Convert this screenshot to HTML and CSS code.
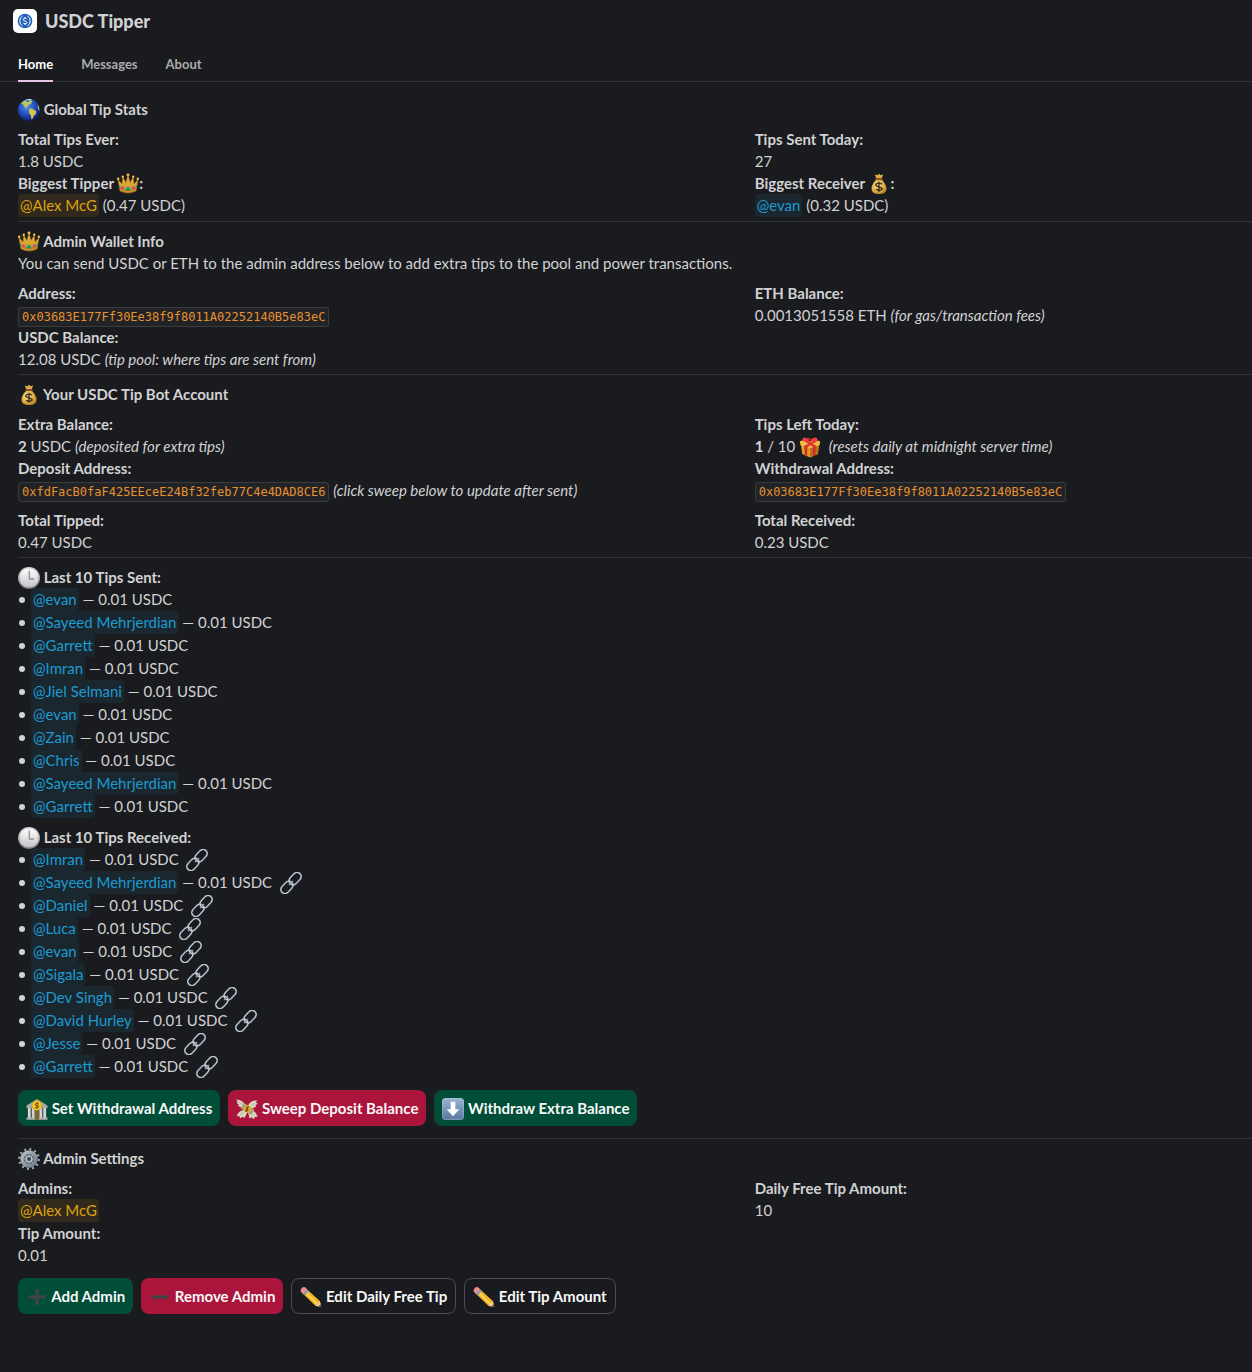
FILE: index.html
```html
<!DOCTYPE html>
<html lang="en">
<head>
<meta charset="utf-8">
<meta name="viewport" content="width=device-width, initial-scale=1">
<title>USDC Tipper</title>
<link rel="stylesheet" href="styles.css">
</head>
<body>
<svg class="sprite" aria-hidden="true">
  <defs>
    <radialGradient id="sea" cx=".4" cy=".35" r=".65"><stop offset="0" stop-color="#4d8df0"/><stop offset=".55" stop-color="#2350c4"/><stop offset="1" stop-color="#0d1d66"/></radialGradient>
    <linearGradient id="gold" x1="0" y1="0" x2="0" y2="1"><stop offset="0" stop-color="#eec64c"/><stop offset="1" stop-color="#c98a1b"/></linearGradient>
    <radialGradient id="bag" cx=".4" cy=".4" r=".65"><stop offset="0" stop-color="#fbe08a"/><stop offset=".6" stop-color="#e0b04a"/><stop offset="1" stop-color="#b5832a"/></radialGradient>
    <linearGradient id="face" x1="0" y1="0" x2="0" y2="1"><stop offset="0" stop-color="#ffffff"/><stop offset="1" stop-color="#c4c4c8"/></linearGradient>
    <linearGradient id="rim" x1="0" y1="0" x2="0" y2="1"><stop offset="0" stop-color="#d8d8da"/><stop offset="1" stop-color="#77777b"/></linearGradient>
    <linearGradient id="blue" x1="0" y1="0" x2="0" y2="1"><stop offset="0" stop-color="#9bb4d2"/><stop offset="1" stop-color="#56789f"/></linearGradient>
    <linearGradient id="steel" x1="0" y1="0" x2="1" y2="1"><stop offset="0" stop-color="#b4bec8"/><stop offset="1" stop-color="#737e89"/></linearGradient>
  </defs>
  <symbol id="globe" viewBox="0 0 22 22">
    <circle cx="11" cy="11" r="11" fill="url(#sea)"/>
    <path d="M3 4.500 6.500 1.500 9 1.200 8.200 2.800 10.800 3.100 12.200 1.200 14.500 1.800 13.500 4.200 11.400 5.600 10 7.200 8.300 7.500 9.500 9 8.400 9.400 6.300 7.800 5.100 5.600Z" fill="#b9c75b"/>
    <path d="M10.800 10.200 13.200 9.300 15.500 10.500 18.300 12.300 17.700 15.200 15.700 16.800 14.800 19.600 13.300 20.600 13 16.800 11.200 14.200Z" fill="#d0c64e"/>
    <path d="M19.700 5.200 21 8 21.500 11 20.600 11.800 19.700 8.500Z" fill="#9aab4a"/>
    <path d="M7.500.8 11 .1 14 .6 12 1.500Z" fill="#e8f0e0"/>
  </symbol>
  <symbol id="crown" viewBox="0 0 22 22">
    <path d="M3 18 .8 6.200 5 11 5.700 4.200 9 9.600 11 2 13 9.600 16.300 4.200 17 11 21.200 6.200 19 18Q11 22 3 18Z" fill="url(#gold)" stroke="#a8741a" stroke-width=".6"/>
    <path d="M3 15Q11 19.500 19 15" fill="none" stroke="#a06d16" stroke-width=".8"/>
    <circle cx="1.200" cy="5.800" r="1.200" fill="#f3c548"/><circle cx="5.800" cy="3.700" r="1.200" fill="#f3c548"/><circle cx="11" cy="2" r="1.400" fill="#f3c548"/><circle cx="16.200" cy="3.700" r="1.200" fill="#f3c548"/><circle cx="20.800" cy="5.800" r="1.200" fill="#f3c548"/>
    <ellipse cx="11" cy="16" rx="2.100" ry="1.900" fill="#0c9c83"/><circle cx="5.500" cy="14.800" r="1.300" fill="#d32fa0"/><circle cx="16.500" cy="14.800" r="1.300" fill="#d32fa0"/><circle cx="2.700" cy="13.300" r=".9" fill="#15a08a"/><circle cx="19.300" cy="13.300" r=".9" fill="#15a08a"/>
  </symbol>
  <symbol id="moneybag" viewBox="0 0 22 22">
    <path d="M8.400 5.500 6.800 1.600 9.300 2.300 11 .8 12.800 2.300 15.200 1.400 13.600 5.500Z" fill="#dcae4b"/>
    <path d="M8.500 6.500Q3.500 11 3.500 16 3.500 21 11 21T18.500 16Q18.500 11 13.500 6.500Z" fill="url(#bag)"/>
    <path d="M7.800 6H14.200" stroke="#8d4a22" stroke-width="1.700" stroke-linecap="round"/>
    <path d="M14 11.200Q11 9.200 8.600 10.800T10.900 13.800 13.600 16.600 8.100 16.400M11 8.700V18.800" fill="none" stroke="#38291b" stroke-width="1.300"/>
  </symbol>
  <symbol id="gift" viewBox="0 0 22 22">
    <path d="M1.800 8 11 11 20.200 8 18.800 18 11 21.500 3.200 18Z" fill="#d99b24"/>
    <path d="M11 10.500 20.200 8 18.800 18 11 21.500Z" fill="#b97415"/>
    <path d="M.8 5.200 10 2.500 21.200 5.200 20.500 9.200 11 12.200 1.500 9.200Z" fill="#f1bd3e"/>
    <path d="M5.400 10 8.200 11V20L5.800 19ZM13.800 11 16.800 10 16.200 19.200 13.800 20.200Z" fill="#d7262d"/>
    <path d="M4.500 10.300 16.500 4 18.800 4.700 8 11.500ZM3.600 4.300 6 3.600 17.600 10 14.500 11Z" fill="#e23038"/>
    <path d="M11 4.800Q4 7 3.400 3.200 4-.5 11 3.800 18-.5 18.600 3.200 18 7 11 4.800Z" fill="#ef3b43"/><circle cx="11" cy="4.200" r="1.600" fill="#ad1822"/>
  </symbol>
  <symbol id="clock" viewBox="0 0 22 22">
    <circle cx="11" cy="11" r="11" fill="url(#rim)"/><circle cx="11" cy="11" r="9.600" fill="url(#face)"/>
    <path d="M11.300 3.800V12H16" fill="none" stroke="#919195" stroke-width="1.300"/>
    <path d="M11 2V3M11 19V20M2 11H3M19 11H20" stroke="#aaa" stroke-width=".7"/>
  </symbol>
  <symbol id="link" viewBox="0 0 22 22">
    <g fill="none" transform="rotate(-47 11 11)">
      <g stroke="#71808e" stroke-width="1.900"><rect x="-2" y="6.900" width="14" height="8.200" rx="4.100"/><rect x="10" y="6.900" width="14" height="8.200" rx="4.100"/></g>
      <g stroke="#dfe5ea" stroke-width=".8"><rect x="-2" y="6.900" width="14" height="8.200" rx="4.100"/><rect x="10" y="6.900" width="14" height="8.200" rx="4.100"/></g>
      <path d="M8 11H14" stroke="#9ba9b5" stroke-width="1.200"/>
    </g>
  </symbol>
  <symbol id="bank" viewBox="0 0 22 22">
    <path d="M.5 7.500 11 1 21.500 7.500V10H.5Z" fill="#a9aaa3"/><path d="M1.500 10H20.500V20H1.500Z" fill="#4c5d6b"/>
    <path d="M2 10H4.600V20H2ZM6 10H8.500V20H6ZM13.500 10H16V20H13.500ZM17.400 10H20V20H17.400Z" fill="#d6d6cd"/>
    <path d="M.5 19.500H21.500V21.800H.5Z" fill="#aeb0ab"/><path d="M9 13H13V21.800H9Z" fill="#7c682d"/>
    <circle cx="11" cy="7.500" r="4.900" fill="#f5c726" stroke="#c39016" stroke-width=".6"/>
    <path d="M13 6Q11 4.500 9.500 5.800T11 7.600 12.500 9.400 9 9.200M11 4.200V10.800" fill="none" stroke="#67480b" stroke-width=".9"/>
  </symbol>
  <symbol id="wings" viewBox="0 0 22 22">
    <path d="M10 9Q7 1.500.3 1.600L1.500 4 .6 4.900 2.800 6.600 2 7.800 6 10ZM12 8Q14 2 21 2.500L20 4.500 21.700 5.700 19.500 7.200 20 8.700 15 11ZM8.500 12Q2 12.500.8 18.500L3.200 18 4.200 20.200 6.600 18.700 8.500 20 11.500 14ZM12 14 13.500 20.500 15.800 19.200 18 21.500 18.700 19 21.700 18.700Q20.500 13 14.500 12Z" fill="#d9d5be"/>
    <path d="M8 7.500 3 4M14.500 8 18.500 5M8 14 4 17M15 14 18 18" stroke="#b0ab94" stroke-width=".7"/>
    <path d="M8 5 18.500 12 15 17 4.500 10Z" fill="#a8a387"/>
    <path d="M10 6.300 16.300 10.500 12.800 15.600 6.500 11.400Z" fill="#e0a72b"/>
    <path d="M12.900 9.600Q11.200 8.500 10.500 9.700T11.500 11.400 11 13 9.500 12.300M12.300 8.200 10.300 13.800" fill="none" stroke="#4c4325" stroke-width=".8"/>
  </symbol>
  <symbol id="down" viewBox="0 0 22 22">
    <rect width="22" height="22" rx="3.500" fill="url(#blue)"/><rect x=".6" y=".6" width="20.800" height="20.800" rx="3" fill="none" stroke="#ccd9e8" stroke-opacity=".3"/>
    <path d="M8.700 3.800H13.300V11.300H17.300L11 18.300 4.700 11.300H8.700Z" fill="#fff"/>
  </symbol>
  <symbol id="gear" viewBox="0 0 22 22">
    <circle cx="11" cy="11" r="9.800" fill="none" stroke="#9aa6b0" stroke-width="2.400" stroke-dasharray="2 3.131"/>
    <circle cx="11" cy="11" r="6.800" fill="none" stroke="url(#steel)" stroke-width="3.900"/>
    <circle cx="11" cy="11" r="5.200" fill="#66717c"/><path d="M11 5.500V16.500M5.500 11H16.500M7 7 15 15M15 7 7 15" stroke="#97a2ac" stroke-width=".9"/>
    <circle cx="11" cy="11" r="2.800" fill="#3a424b" stroke="#b3bdc6" stroke-width="1.500"/>
  </symbol>
  <symbol id="plus" viewBox="0 0 22 22"><path d="M9.300 3H12.700V9.300H19.300V12.700H12.700V19.300H9.300V12.700H2.700V9.300H9.300Z" fill="#414345"/></symbol>
  <symbol id="minus" viewBox="0 0 22 22"><path d="M2.700 9.300H19.300V12.700H2.700Z" fill="#414345"/></symbol>
  <symbol id="pencil" viewBox="0 0 22 22">
    <path d="M5.800 2.200 19.800 15 21.300 20.900 15.400 19.700 1.700 6.600Z" fill="#f4b527"/><path d="M4.200 5 17 17.800" stroke="#ffd765" stroke-width="1.600"/><path d="M2.900 7.700 6.900 3.200 8.800 4.900 4.700 9.400Z" fill="#8698b0"/>
    <path d="M.7 5.300Q.2 3.200 2 1.700T5.500 1.600L6.900 3.200 2.900 7.700Z" fill="#ef8c90"/><path d="M19.800 15 21.300 20.900 15.400 19.700Z" fill="#ecca96"/><path d="M20.500 18.300 21.300 20.900 18.700 20.300Z" fill="#3b3531"/>
  </symbol>
</svg>

<header class="app-header">
  <svg class="app-logo" viewBox="0 0 24 24" aria-hidden="true">
    <rect width="24" height="24" rx="5" fill="#fff"/><circle cx="12" cy="12" r="7.300" fill="#2261ba"/>
    <path d="M9.600 7Q6.800 8.300 6.800 12T9.600 17M14.400 7Q17.200 8.300 17.200 12T14.400 17M13.900 10.200Q13.500 9.200 12 9.200 10.100 9.200 10.100 10.500T12 12 13.900 13.500 12 14.800Q10.400 14.800 10.100 13.700M12 8V9.200M12 14.800V16" fill="none" stroke="#fff" stroke-width="1"/>
  </svg>
  <h1 class="app-title">USDC Tipper</h1>
</header>
<nav class="tabs" aria-label="App">
  <a class="tab tab-active" href="#home" aria-current="page">Home</a>
  <a class="tab" href="#messages">Messages</a>
  <a class="tab" href="#about">About</a>
</nav>

<main class="content" id="home">
  <section class="block">
    <h2 class="heading"><svg class="emoji"><use href="#globe"/></svg> Global Tip Stats</h2>
    <dl class="fields">
      <div><dt>Total Tips Ever:</dt><dd>1.8 USDC</dd></div>
      <div><dt>Tips Sent Today:</dt><dd>27</dd></div>
      <div><dt>Biggest Tipper <svg class="emoji"><use href="#crown"/></svg>:</dt><dd><a class="mention mention-self" href="#alex">@Alex McG</a> (0.47 USDC)</dd></div>
      <div><dt>Biggest Receiver <svg class="emoji"><use href="#moneybag"/></svg>:</dt><dd><a class="mention" href="#evan">@evan</a> (0.32 USDC)</dd></div>
    </dl>
  </section>

  <section class="block">
    <h2 class="heading"><svg class="emoji"><use href="#crown"/></svg> Admin Wallet Info</h2>
    <p class="text">You can send USDC or ETH to the admin address below to add extra tips to the pool and power transactions.</p>
    <dl class="fields">
      <div><dt>Address:</dt><dd><code class="code">0x03683E177Ff30Ee38f9f8011A02252140B5e83eC</code></dd></div>
      <div><dt>ETH Balance:</dt><dd>0.0013051558 ETH <em>(for gas/transaction fees)</em></dd></div>
      <div><dt>USDC Balance:</dt><dd>12.08 USDC <em>(tip pool: where tips are sent from)</em></dd></div>
    </dl>
  </section>

  <section class="block">
    <h2 class="heading"><svg class="emoji"><use href="#moneybag"/></svg> Your USDC Tip Bot Account</h2>
    <dl class="fields">
      <div><dt>Extra Balance:</dt><dd><b>2</b> USDC <em>(deposited for extra tips)</em></dd></div>
      <div><dt>Tips Left Today:</dt><dd><b>1</b> / 10 <svg class="emoji"><use href="#gift"/></svg>&nbsp; <em>(resets daily at midnight server time)</em></dd></div>
      <div><dt>Deposit Address:</dt><dd><code class="code">0xfdFacB0faF425EEceE24Bf32feb77C4e4DAD8CE6</code> <em>(click sweep below to update after sent)</em></dd></div>
      <div><dt>Withdrawal Address:</dt><dd><code class="code">0x03683E177Ff30Ee38f9f8011A02252140B5e83eC</code></dd></div>
    </dl>
    <dl class="fields">
      <div><dt>Total Tipped:</dt><dd>0.47 USDC</dd></div>
      <div><dt>Total Received:</dt><dd>0.23 USDC</dd></div>
    </dl>
  </section>

  <section class="block block-actions">
    <h2 class="heading"><svg class="emoji"><use href="#clock"/></svg> Last 10 Tips Sent:</h2>
    <ul class="tips">
      <li><a class="mention" href="#evan">@evan</a> — 0.01 USDC</li>
      <li><a class="mention" href="#sayeed">@Sayeed Mehrjerdian</a> — 0.01 USDC</li>
      <li><a class="mention" href="#garrett">@Garrett</a> — 0.01 USDC</li>
      <li><a class="mention" href="#imran">@Imran</a> — 0.01 USDC</li>
      <li><a class="mention" href="#jiel">@Jiel Selmani</a> — 0.01 USDC</li>
      <li><a class="mention" href="#evan">@evan</a> — 0.01 USDC</li>
      <li><a class="mention" href="#zain">@Zain</a> — 0.01 USDC</li>
      <li><a class="mention" href="#chris">@Chris</a> — 0.01 USDC</li>
      <li><a class="mention" href="#sayeed">@Sayeed Mehrjerdian</a> — 0.01 USDC</li>
      <li><a class="mention" href="#garrett">@Garrett</a> — 0.01 USDC</li>
    </ul>
    <h2 class="heading heading-next"><svg class="emoji"><use href="#clock"/></svg> Last 10 Tips Received:</h2>
    <ul class="tips">
      <li><a class="mention" href="#imran">@Imran</a> — 0.01 USDC&nbsp; <a href="#tx1" aria-label="Transaction"><svg class="emoji"><use href="#link"/></svg></a></li>
      <li><a class="mention" href="#sayeed">@Sayeed Mehrjerdian</a> — 0.01 USDC&nbsp; <a href="#tx2" aria-label="Transaction"><svg class="emoji"><use href="#link"/></svg></a></li>
      <li><a class="mention" href="#daniel">@Daniel</a> — 0.01 USDC&nbsp; <a href="#tx3" aria-label="Transaction"><svg class="emoji"><use href="#link"/></svg></a></li>
      <li><a class="mention" href="#luca">@Luca</a> — 0.01 USDC&nbsp; <a href="#tx4" aria-label="Transaction"><svg class="emoji"><use href="#link"/></svg></a></li>
      <li><a class="mention" href="#evan">@evan</a> — 0.01 USDC&nbsp; <a href="#tx5" aria-label="Transaction"><svg class="emoji"><use href="#link"/></svg></a></li>
      <li><a class="mention" href="#sigala">@Sigala</a> — 0.01 USDC&nbsp; <a href="#tx6" aria-label="Transaction"><svg class="emoji"><use href="#link"/></svg></a></li>
      <li><a class="mention" href="#dev">@Dev Singh</a> — 0.01 USDC&nbsp; <a href="#tx7" aria-label="Transaction"><svg class="emoji"><use href="#link"/></svg></a></li>
      <li><a class="mention" href="#david">@David Hurley</a> — 0.01 USDC&nbsp; <a href="#tx8" aria-label="Transaction"><svg class="emoji"><use href="#link"/></svg></a></li>
      <li><a class="mention" href="#jesse">@Jesse</a> — 0.01 USDC&nbsp; <a href="#tx9" aria-label="Transaction"><svg class="emoji"><use href="#link"/></svg></a></li>
      <li><a class="mention" href="#garrett">@Garrett</a> — 0.01 USDC&nbsp; <a href="#tx10" aria-label="Transaction"><svg class="emoji"><use href="#link"/></svg></a></li>
    </ul>
    <div class="actions">
      <button class="button button-primary" type="button"><svg class="emoji"><use href="#bank"/></svg> Set Withdrawal Address</button>
      <button class="button button-danger" type="button"><svg class="emoji"><use href="#wings"/></svg> Sweep Deposit Balance</button>
      <button class="button button-primary" type="button"><svg class="emoji"><use href="#down"/></svg> Withdraw Extra Balance</button>
    </div>
  </section>

  <section class="block">
    <h2 class="heading"><svg class="emoji"><use href="#gear"/></svg> Admin Settings</h2>
    <dl class="fields">
      <div><dt>Admins:</dt><dd><a class="mention mention-self" href="#alex">@Alex McG</a></dd></div>
      <div><dt>Daily Free Tip Amount:</dt><dd>10</dd></div>
      <div><dt>Tip Amount:</dt><dd>0.01</dd></div>
    </dl>
    <div class="actions">
      <button class="button button-primary" type="button"><svg class="emoji"><use href="#plus"/></svg> Add Admin</button>
      <button class="button button-danger" type="button"><svg class="emoji"><use href="#minus"/></svg> Remove Admin</button>
      <button class="button" type="button"><svg class="emoji"><use href="#pencil"/></svg> Edit Daily Free Tip</button>
      <button class="button" type="button"><svg class="emoji"><use href="#pencil"/></svg> Edit Tip Amount</button>
    </div>
  </section>
</main>
</body>
</html>
```
FILE: styles.css
```css
* {
  box-sizing: border-box;
}

body {
  margin: 0;
  background: #1a1b1f;
  color: #d1d2d3;
  font: 15px/22px Lato, sans-serif;
}

.sprite {
  position: absolute;
  width: 0;
  height: 0;
}

.app-header {
  display: flex;
  align-items: center;
  gap: 8px;
  height: 42px;
  padding: 0 13px;
}

.app-logo {
  width: 24px;
  height: 24px;
}

.app-title {
  margin: 0;
  font-size: 18px;
  font-weight: 900;
}

.tabs {
  display: flex;
  gap: 28px;
  height: 40px;
  padding: 5px 18px 0;
  border-bottom: 1px solid #313236;
}

.tab {
  height: 35px;
  border-bottom: 2px solid transparent;
  color: #ababad;
  font-size: 13px;
  font-weight: 700;
  line-height: 34px;
  text-decoration: none;
}

.tab-active {
  border-color: #e3c5ea;
  color: #fff;
}

.content {
  padding: 16px 0 58px 18px;
}

.block + .block {
  margin-top: 4px;
  padding-top: 8px;
  border-top: 1px solid #313236;
}

.block-actions + .block {
  margin-top: 12px;
}

.heading {
  margin: 0;
  font-size: 15px;
  font-weight: 700;
  line-height: 22px;
}

.heading-next {
  margin-top: 8px;
}

.text {
  margin: 0;
}

.fields {
  display: grid;
  grid-template-columns: minmax(0, 597fr) minmax(0, 403fr);
  margin: 8px 0 0;
}

dt {
  font-weight: 700;
}

dd {
  margin: 0;
}

.emoji {
  width: 22px;
  height: 22px;
  margin: -3px 0;
  overflow: visible;
  vertical-align: -3px;
}

.mention {
  display: inline-block;
  padding: 0 2px;
  border-radius: 3px;
  background: #1a272f;
  color: #1d9bd1;
  line-height: 23px;
  text-decoration: none;
}

.mention-self {
  background: #30291c;
  color: #dfa20f;
}

.code {
  padding: 2px 3px;
  border: 1px solid #3b3c40;
  border-radius: 3px;
  background: #222327;
  color: #e8912d;
  font: 12px/18px "DejaVu Sans Mono", monospace;
}

.tips {
  margin: 0;
  padding: 0;
  list-style: none;
}

.tips li::before {
  content: "";
  display: inline-block;
  width: 6px;
  height: 6px;
  margin: 0 6px 2px 1px;
  border-radius: 50%;
  background: #d1d2d3;
}

.actions {
  display: flex;
  flex-wrap: wrap;
  gap: 8px;
  margin-top: 12px;
}

.button {
  height: 36px;
  padding: 0 8px;
  border: 1px solid #4d4e52;
  border-radius: 8px;
  background: transparent;
  color: #f8f8f8;
  font: 700 15px/22px Lato, sans-serif;
}

.button-primary {
  border: 0;
  background: #004d38;
}

.button-danger {
  border: 0;
  background: #ab143b;
}
```
